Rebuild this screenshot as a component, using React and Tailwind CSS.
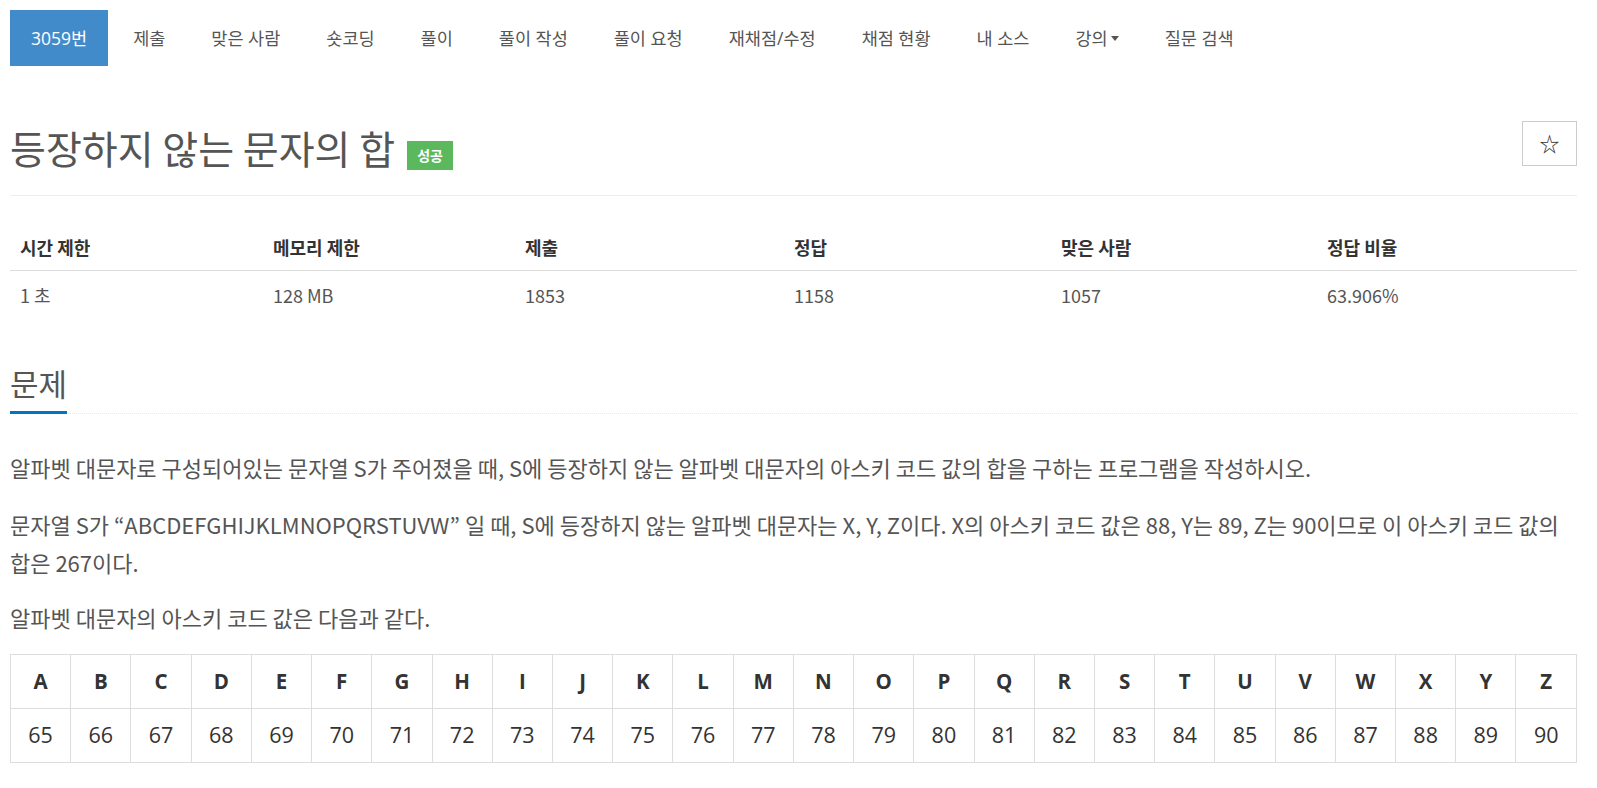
import { useState } from 'react';

const menu = [
  '제출',
  '맞은 사람',
  '숏코딩',
  '풀이',
  '풀이 작성',
  '풀이 요청',
  '재채점/수정',
  '채점 현황',
  '내 소스',
  '강의',
  '질문 검색',
];

const stats = [
  ['시간 제한', '1 초'],
  ['메모리 제한', '128 MB'],
  ['제출', '1853'],
  ['정답', '1158'],
  ['맞은 사람', '1057'],
  ['정답 비율', '63.906%'],
];

const letters = 'ABCDEFGHIJKLMNOPQRSTUVWXYZ'.split('');

const App = () => {
  const [starred, setStarred] = useState(false);

  return (
    <div className="min-h-screen bg-white pl-[10px] pr-[20px] pt-[10px] font-['Noto_Sans_CJK_KR','Noto_Sans',sans-serif] text-[#555]">
      {/* Problem menu */}
      <ul className="flex h-[56px] gap-[4px] font-['Open_Sans','Noto_Sans_CJK_KR',sans-serif] text-[17.5px]">
        <li className="flex items-center bg-[#428bca] px-[21px] text-white">3059번</li>
        {menu.map((item) => (
          <li key={item} className="flex items-center px-[21px] text-[#555]">
            {item}
            {item === '강의' && (
              <span className="ml-[3px] inline-block h-0 w-0 border-x-[4.5px] border-t-[5px] border-x-transparent border-t-[#555]" />
            )}
          </li>
        ))}
      </ul>

      {/* Header */}
      <div className="flex items-start justify-between border-b border-[#eee] pb-[25px] pt-[55px]">
        <div className="mt-[3px] flex items-end gap-[12px]">
          <h1 className="text-[39px] leading-[46px] text-[#555]">등장하지 않는 문자의 합</h1>
          <span className="flex h-[29px] w-[46px] items-center justify-center bg-[#5cb85c] text-[14px] font-bold text-white">
            성공
          </span>
        </div>
        <button
          onClick={() => setStarred(!starred)}
          className="flex h-[45px] w-[55px] items-center justify-center border border-[#ccc] text-[20px] text-[#333]"
        >
          {starred ? '★' : '☆'}
        </button>
      </div>

      {/* Stats */}
      <div className="mt-[29px]">
        <div className="grid h-[46px] grid-cols-[253px_252px_269px_267px_266px_1fr] items-center border-b border-[#ddd] text-[18px] font-bold text-[#333]">
          {stats.map(([label]) => (
            <div key={label} className="px-[10px]">{label}</div>
          ))}
        </div>
        <div className="grid h-[48px] grid-cols-[253px_252px_269px_267px_266px_1fr] items-center text-[18px] text-[#555]">
          {stats.map(([label, value]) => (
            <div key={label} className="px-[10px]">{value}</div>
          ))}
        </div>
      </div>

      {/* Description */}
      <div className="mt-[46px] border-b border-dotted border-[#e4e9f0]">
        <h2 className="-mb-px inline-block border-b-[3px] border-[#0076c0] pb-[10px] text-[31px] leading-[36px] text-[#555]">
          문제
        </h2>
      </div>

      <div className="mt-[34px] break-keep text-[22px] leading-[38px] text-[#555]">
        <p className="mb-[19px]">
          알파벳 대문자로 구성되어있는 문자열 S가 주어졌을 때, S에 등장하지 않는 알파벳 대문자의 아스키 코드 값의 합을 구하는 프로그램을 작성하시오.
        </p>
        <p className="mb-[17px]">
          문자열 S가 “ABCDEFGHIJKLMNOPQRSTUVW” 일 때, S에 등장하지 않는 알파벳 대문자는 X, Y, Z이다. X의 아스키 코드 값은 88, Y는 89, Z는 90이므로 이 아스키 코드 값의 합은 267이다.
        </p>
        <p>알파벳 대문자의 아스키 코드 값은 다음과 같다.</p>
      </div>

      <table className="mt-[18px] w-full table-fixed border-collapse font-['Open_Sans',sans-serif] text-[#333]">
        <tbody>
          <tr className="h-[54px]">
            {letters.map((c) => (
              <th key={c} className="border border-[#ddd] text-center text-[20.5px] font-bold">{c}</th>
            ))}
          </tr>
          <tr className="h-[54px]">
            {letters.map((c) => (
              <td key={c} className="border border-[#ddd] text-center text-[21.5px]">{c.charCodeAt(0)}</td>
            ))}
          </tr>
        </tbody>
      </table>
    </div>
  );
};

export default App;
